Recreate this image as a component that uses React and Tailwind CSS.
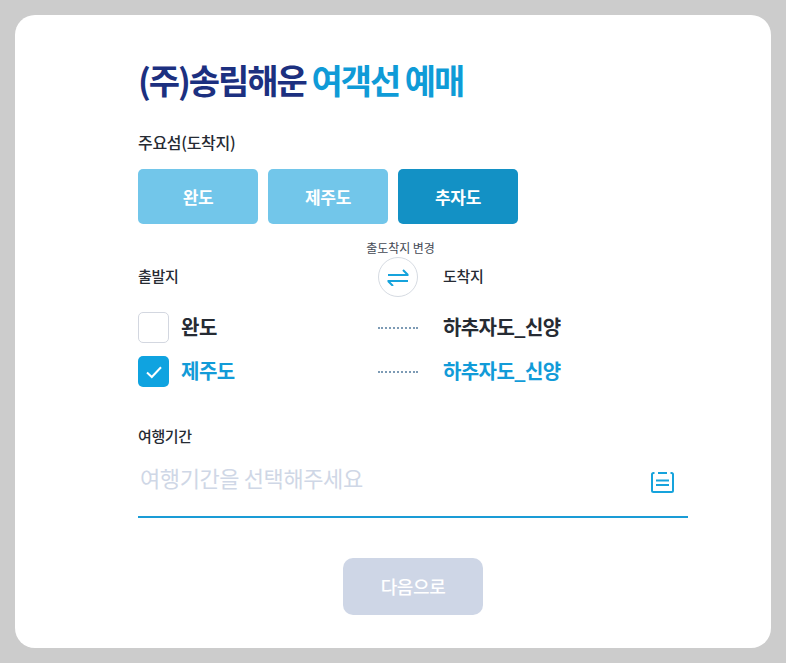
import React from "react";

function Row({ checked, from, to }) {
  const color = checked ? "text-[#129bd8]" : "text-[#262b33]";
  return (
    <div className="flex items-center h-[31px]">
      <div className="w-[240px] flex items-center">
        <span className={checked ? "w-[31px] h-[31px] rounded-[5px] bg-[#0fa3e0] flex items-center justify-center" : "w-[31px] h-[31px] rounded-[5px] border border-[#d3d7e0] bg-white"}>
          {checked && (
            <svg width="18" height="14" viewBox="0 0 18 14" fill="none">
              <path d="M2 7.5 L6.8 12 L16 2.2" stroke="#fff" strokeWidth="2" />
            </svg>
          )}
        </span>
        <span className={`ml-[12px] pb-[2px] text-[20px] font-bold leading-[31px] tracking-[-0.5px] ${color}`}>{from}</span>
      </div>
      <div className="w-[40px] border-t-2 border-dotted border-[#7d9bb5]" />
      <div className={`ml-[25px] pb-[2px] text-[20px] font-bold leading-[31px] tracking-[-0.6px] ${color}`}>{to}</div>
    </div>
  );
}

export default function App() {
  return (
    <div className="w-[786px] h-[663px] bg-[#cccccc] p-[15px] font-['Noto_Sans_CJK_KR','Noto_Sans',sans-serif]">
      <div className="w-[756px] h-[633px] bg-white rounded-[20px] pl-[123px] pr-[83px] pt-[41px]">
        <h1 className="text-[34px] leading-[48px] font-bold tracking-[-2.05px] text-[#1c3080]">
          (주)송림해운 <span className="text-[#0f9bd7]">여객선 예매</span>
        </h1>
        <div className="mt-[27px] text-[16px] leading-[22px] font-medium tracking-[-0.3px] text-[#262b33]">주요섬(도착지)</div>
        <div className="mt-[16px] flex gap-[10px]">
          <button className="w-[120px] h-[55px] rounded-[5px] bg-[#72c6ea] text-white text-[17px] font-bold tracking-[-0.3px]">완도</button>
          <button className="w-[120px] h-[55px] rounded-[5px] bg-[#72c6ea] text-white text-[17px] font-bold tracking-[-0.3px]">제주도</button>
          <button className="w-[120px] h-[55px] rounded-[5px] bg-[#1391c5] text-white text-[17px] font-bold tracking-[-0.3px]">추자도</button>
        </div>
        <div className="mt-[15px] flex items-end h-[58px]">
          <div className="w-[240px] text-[15px] leading-[42px] font-medium tracking-[-0.3px] text-[#262b33]">출발지</div>
          <div className="w-[40px] flex flex-col items-center">
            <div className="ml-[5px] text-[12px] leading-[18px] tracking-[-0.05px] text-[#444a55] whitespace-nowrap">출도착지 변경</div>
            <div className="w-[40px] h-[40px] rounded-full border border-[#d6dbe2] flex items-center justify-center shrink-0">
              <svg width="22" height="18" viewBox="0 0 22 18" fill="none" stroke="#16a3dc" strokeWidth="2">
                <path d="M1 7 H21.5 M16 2 L21 7" />
                <path d="M21 13 H0.5 M6 18 L1 13" />
              </svg>
            </div>
          </div>
          <div className="ml-[25px] text-[15px] leading-[42px] font-medium tracking-[-0.3px] text-[#262b33]">도착지</div>
        </div>
        <div className="mt-[15px] flex flex-col gap-[13px]">
          <Row from="완도" to="하추자도_신양" />
          <Row checked from="제주도" to="하추자도_신양" />
        </div>
        <div className="mt-[39px] text-[15px] leading-[20px] font-medium tracking-[-0.4px] text-[#262b33]">여행기간</div>
        <div className="mt-[7px] h-[65px] border-b-2 border-[#1a9cd6] flex items-start justify-between pr-[14px]">
          <span className="pl-[2px] pt-[7px] text-[22px] leading-[34px] tracking-[-0.4px] text-[#cfd7e6]">여행기간을 선택해주세요</span>
          <svg className="mt-[18px]" width="23" height="22" viewBox="0 0 23 22" fill="none" stroke="#16a3dc" strokeWidth="2">
            <path d="M3.5 2 H2.5 A1.5 1.5 0 0 0 1 3.5 V19.5 A1.5 1.5 0 0 0 2.5 21 H20.5 A1.5 1.5 0 0 0 22 19.5 V3.5 A1.5 1.5 0 0 0 20.5 2 H19.5" />
            <path d="M7 2 H16" />
            <path d="M5 9.5 H18 M5 14 H18" strokeWidth="1.8" />
          </svg>
        </div>
        <div className="mt-[40px] flex justify-center">
          <button className="w-[140px] h-[57px] rounded-[10px] bg-[#ced6e6] text-white text-[18px] font-medium tracking-[-0.4px]">다음으로</button>
        </div>
      </div>
    </div>
  );
}
